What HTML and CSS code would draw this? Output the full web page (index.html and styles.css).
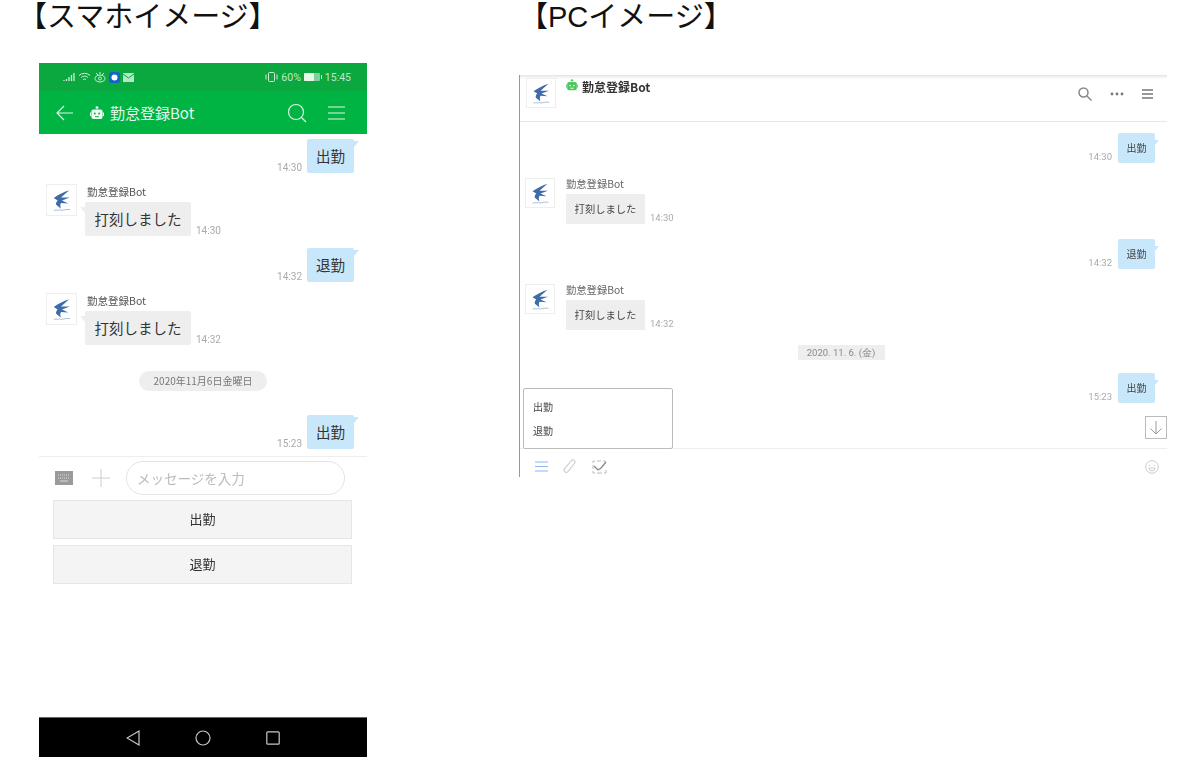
FILE: index.html
```html
<!DOCTYPE html>
<html lang="ja">
<head>
<meta charset="utf-8">
<title>イメージ</title>
<link rel="stylesheet" href="styles.css">
</head>
<body>
<svg class="defs" width="0" height="0" aria-hidden="true">
  <symbol id="logo" viewBox="0 0 30 30">
    <path d="M23 5 C17 7 11 10 7 13 L11 15.500 C9.500 17 9 19 9.500 20 L14.500 24 C13.500 22 13.500 19.500 14.500 18 L22 18.500 L15.500 15.500 L23.500 12.500 L14.500 12.500 Z" fill="#3f6ba8"/>
    <path d="M7 26 C10 24 11 27 13 25 C15 27 18 24 24 25" fill="none" stroke="#7f9cc6" stroke-width=".7"/>
  </symbol>
  <symbol id="robot" viewBox="0 0 14 14">
    <circle cx="7" cy="1.600" r="1.400" fill="currentColor"/>
    <rect x="1.400" y="3.600" width="11.200" height="9.400" rx="2" fill="currentColor"/>
    <rect x="0" y="6.500" width="1" height="3.500" fill="currentColor"/>
    <rect x="13" y="6.500" width="1" height="3.500" fill="currentColor"/>
    <circle cx="4.800" cy="7.600" r="1" fill="var(--eye)"/>
    <circle cx="9.200" cy="7.600" r="1" fill="var(--eye)"/>
    <rect x="5" y="10.200" width="4" height="1" fill="var(--eye)"/>
  </symbol>
</svg>

<main class="page">
  <section class="col col-phone">
    <h1 class="title title-phone">【スマホイメージ】</h1>
    <div class="phone">
      <div class="status">
        <div class="status-left">
          <svg width="12" height="9" viewBox="0 0 12 9"><path d="M1 8v-1M3.500 8V6M6 8V4M8.500 8V2M11 8V0" stroke="#cfeeda" stroke-width="1.300" fill="none"/></svg>
          <svg width="13" height="10" viewBox="0 0 13 10" fill="none" stroke="#cfeeda"><path d="M1 3.500a8 8 0 0 1 11 0M3 5.500a5 5 0 0 1 7 0M5 7.500a2.500 2.500 0 0 1 3 0"/></svg>
          <svg width="12" height="11" viewBox="0 0 12 11" fill="none" stroke="#cfeeda"><ellipse cx="6" cy="6.500" rx="5" ry="3.500"/><circle cx="6" cy="6.500" r="1.500"/><path d="M2 1l2 2M10 1L8 3M6 0v2"/></svg>
          <svg width="11" height="11" viewBox="0 0 11 11"><rect width="11" height="11" rx="2.500" fill="#1565c8"/><circle cx="5.500" cy="5.500" r="3" fill="#fff"/></svg>
          <svg width="11" height="9" viewBox="0 0 11 9"><rect width="11" height="9" fill="#b5e6c6"/><path d="M0 1l5.500 4L11 1" fill="none" stroke="#0aa83e"/></svg>
        </div>
        <div class="status-right">
          <svg width="13" height="10" viewBox="0 0 13 10" fill="none" stroke="#cfeeda"><rect x="3.500" y=".5" width="6" height="9" rx="1"/><path d="M1 2.500v5M12 2.500v5"/></svg>
          <span>60%</span>
          <svg class="battery" width="18" height="8" viewBox="0 0 18 8"><rect width="16" height="8" rx="1" fill="#7fd09b"/><rect width="10" height="8" rx="1" fill="#e6f7ec"/><rect x="17" y="2" width="1" height="4" fill="#cfeeda"/></svg>
          <span>15:45</span>
        </div>
      </div>
      <header class="phone-head">
        <svg class="back" width="18" height="16" viewBox="0 0 18 16" fill="none" stroke="#dff5e6" stroke-width="1.200"><path d="M17 8H1M8 1L1 8l7 7"/></svg>
        <svg class="robot robot-white" width="14" height="14"><use href="#robot"/></svg>
        <span class="phone-name">勤怠登録Bot</span>
        <svg class="head-search" width="20" height="20" viewBox="0 0 20 20" fill="none" stroke="#dff5e6" stroke-width="1.200"><circle cx="9" cy="9" r="7.500"/><path d="M14.500 14.500L19 19"/></svg>
        <svg class="head-menu" width="17" height="14" viewBox="0 0 17 14" stroke="#dff5e6" stroke-width="1.100"><path d="M0 1h17M0 7h17M0 13h17"/></svg>
      </header>

      <div class="chat">
        <div class="row-out gap-first"><span class="time">14:30</span><div class="bubble-out">出勤</div></div>
        <div class="row-in">
          <svg class="avatar" width="31" height="32"><use href="#logo"/></svg>
          <div class="in-body">
            <div class="sender">勤怠登録Bot</div>
            <div class="in-line"><div class="bubble-in">打刻しました</div><span class="time">14:30</span></div>
          </div>
        </div>
        <div class="row-out gap-out"><span class="time">14:32</span><div class="bubble-out">退勤</div></div>
        <div class="row-in">
          <svg class="avatar" width="31" height="32"><use href="#logo"/></svg>
          <div class="in-body">
            <div class="sender">勤怠登録Bot</div>
            <div class="in-line"><div class="bubble-in">打刻しました</div><span class="time">14:32</span></div>
          </div>
        </div>
        <div class="date-pill">2020年11月6日金曜日</div>
        <div class="row-out gap-date"><span class="time">15:23</span><div class="bubble-out">出勤</div></div>
      </div>

      <div class="input-row">
        <svg width="18" height="14" viewBox="0 0 18 14"><rect width="18" height="14" fill="#9a9a9a"/><path d="M3 4h12M3 7h12" stroke="#ddd" stroke-dasharray="1 1"/><path d="M5 10h8" stroke="#ddd"/></svg>
        <svg class="plus" width="18" height="18" viewBox="0 0 18 18" stroke="#ccc"><path d="M9 0v18M0 9h18"/></svg>
        <div class="input-box">メッセージを入力</div>
      </div>
      <div class="menu-buttons">
        <div class="menu-btn">出勤</div>
        <div class="menu-btn">退勤</div>
      </div>
      <nav class="softkeys">
        <svg width="14" height="16" viewBox="0 0 14 16" fill="none" stroke="#c8c8c8" stroke-width="1.200"><path d="M13 1v14L1 8z"/></svg>
        <svg width="16" height="16" viewBox="0 0 16 16" fill="none" stroke="#c8c8c8" stroke-width="1.200"><circle cx="8" cy="8" r="7"/></svg>
        <svg width="14" height="14" viewBox="0 0 14 14" fill="none" stroke="#c8c8c8" stroke-width="1.200"><rect x=".8" y=".8" width="12.400" height="12.400" rx="1"/></svg>
      </nav>
    </div>
  </section>

  <section class="col col-pc">
    <h1 class="title title-pc">【PCイメージ】</h1>
    <div class="pc">
      <header class="pc-head">
        <svg class="pc-avatar" width="30" height="30"><use href="#logo"/></svg>
        <svg class="robot robot-green" width="12" height="12"><use href="#robot"/></svg>
        <span class="pc-name">勤怠登録Bot</span>
        <div class="pc-tools">
          <svg width="14" height="14" viewBox="0 0 14 14" fill="none" stroke="#888" stroke-width="1.500"><circle cx="5.500" cy="5.500" r="4.500"/><path d="M9 9l4.500 4.500"/></svg>
          <svg width="14" height="4" viewBox="0 0 14 4" fill="#777"><circle cx="2" cy="2" r="1.400"/><circle cx="7" cy="2" r="1.400"/><circle cx="12" cy="2" r="1.400"/></svg>
          <svg width="11" height="10" viewBox="0 0 11 10" stroke="#777" stroke-width="1.300"><path d="M0 1h11M0 5h11M0 9h11"/></svg>
        </div>
      </header>

      <div class="pc-chat">
        <div class="pc-out pc-first"><span class="pc-time">14:30</span><div class="pc-bubble-out">出勤</div></div>
        <div class="pc-in">
          <svg class="pc-avatar" width="30" height="30"><use href="#logo"/></svg>
          <div class="pc-in-body">
            <div class="pc-sender">勤怠登録Bot</div>
            <div class="in-line"><div class="pc-bubble-in">打刻しました</div><span class="pc-time">14:30</span></div>
          </div>
        </div>
        <div class="pc-out pc-gap"><span class="pc-time">14:32</span><div class="pc-bubble-out">退勤</div></div>
        <div class="pc-in">
          <svg class="pc-avatar" width="30" height="30"><use href="#logo"/></svg>
          <div class="pc-in-body">
            <div class="pc-sender">勤怠登録Bot</div>
            <div class="in-line"><div class="pc-bubble-in">打刻しました</div><span class="pc-time">14:32</span></div>
          </div>
        </div>
        <div class="pc-date">2020. 11. 6. (金)</div>
        <div class="pc-out pc-gap-date"><span class="pc-time">15:23</span><div class="pc-bubble-out">出勤</div></div>
      </div>

      <div class="pc-foot">
        <svg width="13" height="11" viewBox="0 0 13 11" stroke="#8db6ee" stroke-width="1.200"><path d="M0 1h13M0 5.500h13M0 10h13"/></svg>
        <svg class="clip" width="14" height="15" viewBox="0 0 14 15" fill="none" stroke="#ccc" stroke-width="1.100"><path d="M12.500 3L5 12.500a2.200 2.200 0 0 1-3.500-2.700L8 2a2 2 0 0 1 3.500 2.300L5.500 12"/></svg>
        <svg width="15" height="14" viewBox="0 0 15 14" fill="none" stroke="#bbb"><path d="M1 3V1h2M11 1h2v1M14 10v3h-2M3 13H1v-2M1 5v4M5 1h4M5 13h5" /><path d="M2 6l4 4 3-2 5-6" stroke="#888" stroke-width="1.300"/></svg>
        <svg class="smile" width="14" height="14" viewBox="0 0 14 14" fill="none" stroke="#ccc"><circle cx="7" cy="7" r="6.300"/><path d="M4 8a3 3 0 0 0 6 0zM4.500 5v1M9.500 5v1"/></svg>
      </div>

      <div class="pc-popup">
        <div class="pc-popup-item">出勤</div>
        <div class="pc-popup-item">退勤</div>
      </div>
      <div class="pc-down">
        <svg width="14" height="14" viewBox="0 0 14 14" fill="none" stroke="#999"><path d="M7 0v13M1.500 7.500L7 13l5.500-5.500"/></svg>
      </div>
    </div>
  </section>
</main>
</body>
</html>
```

FILE: styles.css
```css
* { box-sizing: border-box; }
html, body { margin: 0; padding: 0; background: #fff; }
body {
  width: 1192px;
  height: 781px;
  overflow: hidden;
  font-family: "Noto Sans CJK JP", "Roboto", sans-serif;
  color: #333;
}
.defs { position: absolute; }
.page { display: flex; align-items: flex-start; }
.col { display: flex; flex-direction: column; }
.col-phone { width: 328px; margin-left: 39px; }
.col-pc { width: 648px; margin-left: 152px; }

.title {
  margin: 0;
  height: 32px;
  font-family: "Liberation Sans", "Noto Sans CJK JP", sans-serif;
  font-size: 29px;
  line-height: 34px;
  font-weight: 400;
  color: #111;
  white-space: nowrap;
}
.title-phone { margin-left: -21px; }
.title-pc { margin-left: 0; }

/* phone */
.phone {
  margin-top: 31px;
  height: 694px;
  display: flex;
  flex-direction: column;
  filter: blur(.35px);
}
.status {
  height: 28px;
  flex: none;
  background: #0aa83e;
  display: flex;
  align-items: center;
  justify-content: space-between;
  padding: 0 16px 0 24px;
  font: 10.500px "Roboto", sans-serif;
  color: #bfe8cd;
}
.status-left, .status-right { display: flex; align-items: center; gap: 3px; }
.phone-head {
  height: 43px;
  flex: none;
  background: #00b444;
  display: flex;
  align-items: center;
  padding: 0 22px 0 17px;
  color: #e6f7ec;
  --eye: #00b444;
}
.robot-white { margin-left: 16px; color: #f2fbf5; }
.phone-name { margin-left: 6px; font-size: 15px; flex: 1; }
.head-menu { margin-left: 21px; }

.chat {
  height: 323px;
  flex: none;
  border-bottom: 1px solid #eee;
  padding: 5px 13px 0 7px;
  display: flex;
  flex-direction: column;
}
.row-out { display: flex; justify-content: flex-end; align-items: flex-end; gap: 5px; }
.gap-out { margin-top: 12px; }
.gap-date { margin-top: 24px; }
.bubble-out {
  position: relative;
  width: 47px;
  height: 34px;
  border-radius: 2px;
  background: #c9e7fb;
  font-size: 14.500px;
  line-height: 34px;
  text-align: center;
  color: #333;
}
.bubble-out::after {
  content: "";
  position: absolute;
  top: 2px;
  right: -5px;
  border-top: 6px solid #c9e7fb;
  border-right: 5px solid transparent;
}
.time { font: 10px/13px "Roboto", sans-serif; color: #aaa; margin-bottom: -1px; }
.row-in { display: flex; margin-top: 11px; }
.avatar { flex: none; border: 1px solid #eee; }
.in-body { margin-left: 8px; }
.sender { font-size: 10.500px; line-height: 15px; color: #555; margin-left: 2px; }
.in-line { display: flex; align-items: flex-end; gap: 5px; }
.bubble-in {
  position: relative;
  height: 34px;
  width: 106px;
  margin-top: 3px;
  background: #eee;
  border-radius: 2px;
  font-size: 14.500px;
  line-height: 34px;
  text-align: center;
  color: #333;
}
.bubble-in::before {
  content: "";
  position: absolute;
  top: 5px;
  left: -5px;
  border-top: 6px solid #eee;
  border-left: 5px solid transparent;
}
.date-pill {
  margin: 26px auto 0;
  width: 128px;
  height: 20px;
  border-radius: 10px;
  background: #eee;
  font-size: 10px;
  line-height: 20px;
  text-align: center;
  color: #777;
  transform: translateX(3px);
}

.input-row {
  height: 42px;
  flex: none;
  display: flex;
  align-items: center;
  padding: 0 22px 0 16px;
}
.plus { margin-left: 19px; }
.input-box {
  margin-left: 16px;
  flex: 1;
  height: 34px;
  border: 1px solid #e3e3e3;
  border-radius: 17px;
  padding-left: 10px;
  font-size: 13.500px;
  line-height: 32px;
  color: #bbb;
}
.menu-buttons {
  flex: 1;
  padding: 1px 15px 0 14px;
  display: flex;
  flex-direction: column;
  gap: 6px;
}
.menu-btn {
  height: 39px;
  background: #f4f4f4;
  border: 1px solid #e6e6e6;
  font-size: 13px;
  line-height: 36px;
  text-align: center;
  color: #333;
}
.softkeys {
  height: 40px;
  flex: none;
  background: #000;
  border-top: 1px solid #666;
  display: flex;
  align-items: center;
  justify-content: center;
  gap: 55px;
}

/* pc */
.pc {
  position: relative;
  margin-top: 43px;
  height: 402px;
  border-left: 1px solid #999;
  background: linear-gradient(#e4e4e4, #fff 4px);
  filter: blur(.4px);
}
.pc-head {
  height: 47px;
  display: flex;
  align-items: flex-start;
  padding: 3px 14px 0 6px;
  border-bottom: 1px solid #e8e8e8;
  --eye: #fff;
}
.pc-avatar { flex: none; border: 1px solid #eee; }
.robot-green { margin: 1px 0 0 10px; color: #4cc75a; }
.pc-name { margin: 1px 0 0 4px; font-size: 12px; line-height: 16px; font-weight: 700; color: #333; flex: 1; }
.pc-tools { display: flex; align-items: center; gap: 18px; height: 28px; margin-top: 2px; }

.pc-chat { padding: 11px 12px 0 5px; display: flex; flex-direction: column; }
.pc-out { display: flex; justify-content: flex-end; align-items: flex-end; gap: 6px; }
.pc-gap { margin-top: 15px; }
.pc-gap-date { margin-top: 13px; }
.pc-bubble-out {
  position: relative;
  width: 37px;
  height: 30px;
  border-radius: 2px;
  background: #c9e7fb;
  font-size: 10px;
  line-height: 30px;
  text-align: center;
  color: #444;
}
.pc-bubble-out::after {
  content: "";
  position: absolute;
  top: 7px;
  right: -4px;
  border-top: 5px solid #c9e7fb;
  border-right: 4px solid transparent;
}
.pc-time { font: 9.500px/12px "Roboto", sans-serif; color: #aaa; }
.pc-in { display: flex; margin-top: 15px; }
.pc-in-body { margin-left: 11px; }
.pc-sender { font-size: 10.300px; line-height: 12px; padding-bottom: 4px; color: #666; }
.pc-bubble-in {
  position: relative;
  width: 79px;
  height: 30px;
  background: #eee;
  font-size: 10.300px;
  line-height: 30px;
  text-align: center;
  color: #444;
}
.pc-date {
  margin: 15px auto 0;
  width: 87px;
  height: 15px;
  background: #eee;
  font: 9.500px/15px "Roboto", sans-serif;
  text-align: center;
  color: #888;
  transform: translateX(1px);
}
.pc-popup {
  position: absolute;
  left: 3px;
  top: 313px;
  width: 150px;
  height: 61px;
  background: #fff;
  border: 1px solid #bbb;
  border-radius: 2px;
  padding: 6px 0 0 9px;
}
.pc-popup-item { height: 24px; font-size: 10px; line-height: 24px; color: #444; }
.pc-down {
  position: absolute;
  left: 625px;
  top: 341px;
  width: 22px;
  height: 23px;
  border: 1px solid #bbb;
  background: #fff;
  display: flex;
  align-items: center;
  justify-content: center;
}
.pc-foot {
  position: absolute;
  left: 0;
  right: 0;
  top: 373px;
  height: 29px;
  border-top: 1px solid #eee;
  display: flex;
  align-items: center;
  gap: 15px;
  padding: 7px 8px 0 15px;
}
.smile { margin-left: auto; }
```
